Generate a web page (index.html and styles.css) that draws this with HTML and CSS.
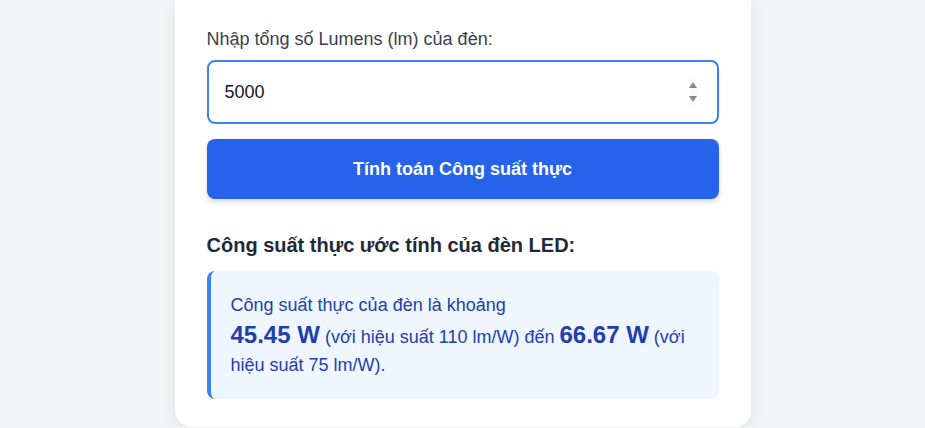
FILE: index.html
```html
<!DOCTYPE html>
<html lang="vi">

<head>
    <meta charset="UTF-8">
    <meta name="viewport" content="width=device-width, initial-scale=1.0">
    <title>Tính Công suất thực đèn LED</title>
    <link rel="stylesheet" href="styles.css">
</head>

<body>

    <div class="card">
        <label for="lumens" class="field-label">Nhập tổng số Lumens (lm) của đèn:</label>
        <div class="input-wrap">
            <input type="number" id="lumens" class="field-input" value="5000" min="0" autofocus>
            <span class="spin">
                <span class="spin-up"></span>
                <span class="spin-down"></span>
            </span>
        </div>

        <button type="button" class="btn-primary">Tính toán Công suất thực</button>

        <h2 class="result-title">Công suất thực ước tính của đèn LED:</h2>
        <div class="result-box">
            <p>Công suất thực của đèn là khoảng<br>
                <strong class="watt">45.45 W</strong> (với hiệu suất 110 lm/W) đến
                <strong class="watt">66.67 W</strong> (với hiệu suất 75 lm/W).</p>
        </div>
    </div>

</body>

</html>
```

FILE: styles.css
```css
body {
    margin: 0;
    background-color: #f3f4f6;
    font-family: "Liberation Sans", Arial, sans-serif;
}

.card {
    width: 576px;
    box-sizing: border-box;
    margin: 0 auto;
    padding: 25px 32px 28px;
    background-color: #fff;
    border-radius: 0 0 16px 16px;
    box-shadow: 0 4px 14px rgba(0, 0, 0, 0.08);
}

.field-label {
    display: block;
    font-size: 18px;
    line-height: 28px;
    color: #374151;
    margin-bottom: 7px;
}

.input-wrap {
    position: relative;
    margin-bottom: 15px;
}

.field-input {
    display: block;
    width: 100%;
    box-sizing: border-box;
    padding: 16px;
    font-family: inherit;
    font-size: 18px;
    line-height: 28px;
    color: #111827;
    border: 2px solid #3b82f6;
    border-radius: 8px;
    outline: none;
}

.field-input::-webkit-inner-spin-button,
.field-input::-webkit-outer-spin-button {
    -webkit-appearance: none;
    margin: 0;
}

.spin {
    position: absolute;
    right: 22px;
    top: 50%;
    transform: translateY(-50%);
    display: flex;
    flex-direction: column;
    gap: 8px;
    padding: 3px 0;
    background-color: #fafafa;
    pointer-events: none;
}

.spin-up {
    border-left: 4px solid transparent;
    border-right: 4px solid transparent;
    border-bottom: 6px solid #8a8a8a;
}

.spin-down {
    border-left: 4px solid transparent;
    border-right: 4px solid transparent;
    border-top: 6px solid #8a8a8a;
}

.btn-primary {
    display: block;
    width: 100%;
    padding: 16px;
    font-family: inherit;
    font-size: 18px;
    line-height: 28px;
    font-weight: bold;
    color: #fff;
    background-color: #2563eb;
    border: none;
    border-radius: 8px;
    box-shadow: 0 4px 6px rgba(0, 0, 0, 0.1), 0 2px 4px rgba(0, 0, 0, 0.06);
    cursor: pointer;
}

.btn-primary:hover {
    background-color: #1d4ed8;
}

.result-title {
    margin: 32px 0 12px;
    font-size: 20px;
    line-height: 28px;
    color: #1f2937;
}

.result-box {
    padding: 20px;
    background-color: #eff6ff;
    border-left: 4px solid #3b82f6;
    border-radius: 8px;
}

.result-box p {
    margin: 0;
    font-size: 18px;
    line-height: 28px;
    color: #1e40af;
}

.watt {
    font-size: 24px;
    line-height: 32px;
}
```
